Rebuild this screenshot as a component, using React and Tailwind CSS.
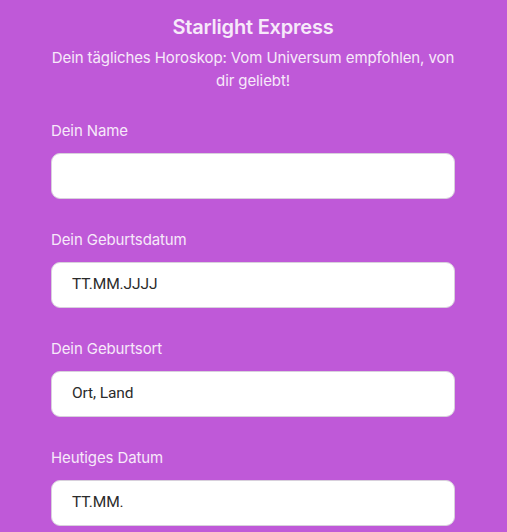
export default function App() {
  const fields = [
    { label: "Dein Name", placeholder: "" },
    { label: "Dein Geburtsdatum", placeholder: "TT.MM.JJJJ" },
    { label: "Dein Geburtsort", placeholder: "Ort, Land" },
    { label: "Heutiges Datum", placeholder: "TT.MM." },
  ];
  return (
    <div className="min-h-[532px] w-full bg-[#bf59d8] overflow-hidden" style={{ fontFamily: "Inter, 'Noto Sans', sans-serif" }}>
      <div className="ml-[51px] w-[404px] pt-[13px]">
        <h1 className="text-center text-[20px] leading-[28px] font-semibold text-[#f7e9fa] tracking-[-0.2px]">Starlight Express</h1>
        <p className="mt-[5px] text-center text-[15px] leading-[23px] text-[#f7e9fa] tracking-[-0.1px]">
          Dein tägliches Horoskop: Vom Universum empfohlen, von dir geliebt!
        </p>
        <div className="mt-[28px] flex flex-col gap-[30px]">
          {fields.map((f) => (
            <div key={f.label} className="flex flex-col">
              <label className="text-[15px] leading-[22px] text-[#f7e9fa] tracking-[-0.1px]">{f.label}</label>
              <div className="mt-[11px] h-[46px] rounded-[9px] border border-[#d8d0dc] bg-white flex items-center pl-[20px] text-[15.5px] text-[#2b2b2b] tracking-[-0.1px]" style={{ fontFamily: "Roboto, sans-serif" }}>
                {f.placeholder}
              </div>
            </div>
          ))}
        </div>
      </div>
    </div>
  );
}
